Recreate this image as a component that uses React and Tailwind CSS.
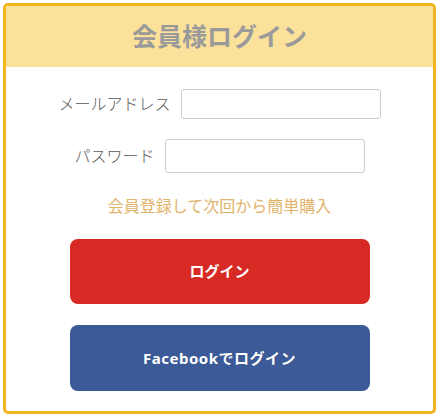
export default function App() {
    const font = { fontFamily: '"Noto Sans", "Noto Sans CJK JP", sans-serif' };

    return (
        <div className="w-[441px] h-[420px] bg-white pt-[3px] pl-[3px]" style={font}>
            {/* Card */}
            <div className="w-[433px] h-[411px] border-[3px] border-[#f3b51f] rounded-[5px] overflow-hidden flex flex-col">
                {/* Header */}
                <div className="h-[61px] shrink-0 bg-[#fce19b] flex items-center justify-center">
                    <h1 className="text-[25px] font-bold text-[#9a9a9a] leading-none">会員様ログイン</h1>
                </div>

                {/* Form */}
                <div className="flex flex-col items-center pt-[22px]">
                    <div className="flex items-center justify-center gap-[10px]">
                        <label className="text-[16px] font-light text-[#5a5a5a] leading-[24px]">メールアドレス</label>
                        <input type="email" className="w-[200px] h-[30px] border border-[#cccccc] rounded-[3px] px-2 outline-none" />
                    </div>
                    <div className="flex items-center justify-center gap-[10px] mt-[20px]">
                        <label className="text-[16px] font-light text-[#5a5a5a] leading-[24px]">パスワード</label>
                        <input type="password" className="w-[200px] h-[34px] border border-[#cccccc] rounded-[3px] px-2 outline-none" />
                    </div>

                    <a href="#" className="mt-[21px] text-[16px] leading-[24px] text-[#e0b46a]">
                        会員登録して次回から簡単購入
                    </a>

                    <button className="mt-[21px] w-[300px] h-[65px] rounded-[8px] bg-[#d82a24] text-white text-[15px] font-bold">
                        ログイン
                    </button>
                    <button className="mt-[21px] w-[300px] h-[66px] rounded-[8px] bg-[#3c5a98] text-white text-[15px] font-bold tracking-[0.5px]">
                        Facebookでログイン
                    </button>
                </div>
            </div>
        </div>
    );
}
